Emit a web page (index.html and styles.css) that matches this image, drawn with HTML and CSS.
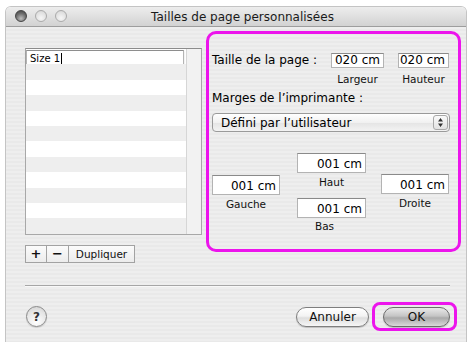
FILE: index.html
```html
<!DOCTYPE html>
<html lang="fr">
<head>
    <meta charset="UTF-8">
    <title>Tailles de page personnalisées</title>
    <link rel="stylesheet" href="styles.css">
</head>
<body>
    <div class="window">
        <div class="titlebar">
            <div class="lights">
                <span class="light light-close"></span>
                <span class="light"></span>
                <span class="light"></span>
            </div>
            <div class="title">Tailles de page personnalisées</div>
        </div>

        <div class="content">
            <div class="main">
                <div class="sizes">
                    <div class="size-list">
                        <div class="rows">
                            <div class="row row-edit"><span class="edit-field">Size 1<span class="caret"></span></span></div>
                            <div class="row"></div>
                            <div class="row"></div>
                            <div class="row"></div>
                            <div class="row"></div>
                            <div class="row"></div>
                            <div class="row"></div>
                            <div class="row"></div>
                            <div class="row"></div>
                            <div class="row"></div>
                            <div class="row"></div>
                            <div class="row"></div>
                        </div>
                        <div class="track"></div>
                    </div>
                    <div class="segmented">
                        <button class="seg seg-icon">+</button>
                        <button class="seg seg-icon">&minus;</button>
                        <button class="seg seg-text">Dupliquer</button>
                    </div>
                </div>

                <div class="panel">
                    <div class="page-size">
                        <div class="field-label">Taille de la page :</div>
                        <div class="field field-w">
                            <div class="input input-sm">020 cm</div>
                            <div class="caption">Largeur</div>
                        </div>
                        <div class="field field-h">
                            <div class="input input-sm">020 cm</div>
                            <div class="caption">Hauteur</div>
                        </div>
                    </div>

                    <div class="section-label">Marges de l’imprimante :</div>
                    <div class="popup">
                        <span>Défini par l’utilisateur</span>
                        <span class="popup-arrows">
                            <svg width="7" height="11" viewBox="0 0 7 11"><path d="M3.5 1 L6 4.5 L1 4.5 Z M3.5 10 L6 6.5 L1 6.5 Z" fill="#333"/></svg>
                        </span>
                    </div>

                    <div class="margins">
                        <div class="mcol mcol-left">
                            <div class="input input-lg">001 cm</div>
                            <div class="caption">Gauche</div>
                        </div>
                        <div class="mcol mcol-mid">
                            <div class="input input-lg">001 cm</div>
                            <div class="caption">Haut</div>
                            <div class="input input-lg input-bas">001 cm</div>
                            <div class="caption caption-bas">Bas</div>
                        </div>
                        <div class="mcol mcol-right">
                            <div class="input input-lg">001 cm</div>
                            <div class="caption">Droite</div>
                        </div>
                    </div>
                </div>
            </div>

            <div class="separator"></div>

            <div class="footer">
                <button class="help">?</button>
                <div class="spacer"></div>
                <button class="pill">Annuler</button>
                <div class="ok-mark">
                    <button class="pill pill-default">OK</button>
                </div>
            </div>
        </div>
    </div>
</body>
</html>
```

FILE: styles.css
```css
body {
    margin: 0;
    padding: 7px 0 0 6px;
    background: #fff;
    font-family: 'DejaVu Sans', sans-serif;
    color: #000;
}

.window {
    width: 460px;
    height: 335px;
    border-radius: 5px 5px 0 0;
    overflow: hidden;
    background: repeating-linear-gradient(#eeeeee 0 2px, #e9e9e9 2px 4px);
    box-shadow: 0 0 0 1px #c4c4c4;
}

.titlebar {
    position: relative;
    height: 19px;
    background: linear-gradient(#ededed, #d2d2d2);
    border-bottom: 1px solid #9d9d9d;
    display: flex;
    align-items: center;
    justify-content: center;
}

.lights {
    position: absolute;
    left: 9px;
    top: 3px;
    display: flex;
    gap: 8px;
}

.light {
    width: 12px;
    height: 12px;
    border-radius: 50%;
    box-sizing: border-box;
    border: 1px solid #aaaaaa;
    background: radial-gradient(circle at 50% 70%, #f6f6f6, #dedede 70%, #c9c9c9);
}

.light-close {
    border-color: #444;
    background: radial-gradient(circle at 50% 75%, #bdbdbd, #6e6e6e 55%, #3e3e3e);
}

.title {
    font-size: 12px;
    color: #1a1a1a;
    margin-left: 13px;
    margin-top: 1px;
}

.content {
    padding: 4px 5px 0 19px;
}

.main {
    display: flex;
    align-items: flex-start;
    gap: 4px;
}

/* liste des tailles */

.sizes {
    width: 177px;
    padding-top: 17px;
}

.size-list {
    height: 187px;
    box-sizing: border-box;
    border: 1px solid #a8a8a8;
    border-top-color: #8c8c8c;
    background: #fff;
    display: flex;
}

.rows {
    flex: 1;
}

.row {
    height: 15.4px;
    background: #fff;
}

.row:nth-child(even) {
    background: #eeeeee;
}

.row-edit {
    padding: 1px 2px 0 0;
    box-sizing: border-box;
}

.edit-field {
    display: flex;
    align-items: center;
    height: 14px;
    border: 1px solid #b4b4b4;
    border-top-color: #8e8e8e;
    background: #fff;
    font-size: 10px;
    padding-left: 3px;
    box-shadow: 0 1px 2px rgba(0, 0, 0, 0.15);
}

.caret {
    width: 1px;
    height: 11px;
    background: #000;
    margin-left: 1px;
}

.track {
    width: 14px;
    background: #f2f2f2;
    border-left: 1px solid #d6d6d6;
}

.segmented {
    display: flex;
    margin-top: 10px;
    height: 18px;
}

.seg {
    height: 18px;
    margin: 0;
    padding: 0;
    border: 1px solid #a2a2a2;
    border-left: none;
    background: linear-gradient(#fbfbfb, #ececec);
    font-family: 'DejaVu Sans', sans-serif;
    color: #111;
}

.seg:first-child {
    border-left: 1px solid #a2a2a2;
}

.seg-icon {
    width: 22px;
    font-size: 13px;
    font-weight: bold;
    line-height: 14px;
}

.seg-text {
    width: 66px;
    font-size: 10.5px;
}

/* zone encadrée */

.panel {
    width: 255px;
    height: 221px;
    box-sizing: border-box;
    border: 3px solid #ec14ec;
    border-radius: 10px;
    padding: 19px 0 0 3px;
}

.page-size {
    display: flex;
    align-items: flex-start;
}

.field-label {
    width: 119px;
    font-size: 12px;
    line-height: 15px;
}

.field {
    display: flex;
    flex-direction: column;
    align-items: center;
}

.field-w {
    width: 53px;
}

.field-h {
    width: 51px;
    margin-left: 14px;
}

.input {
    width: 100%;
    box-sizing: border-box;
    background: #fff;
    border: 1px solid #b3b3b3;
    border-top-color: #8a8a8a;
    text-align: right;
    padding-right: 3px;
    font-size: 12px;
}

.input-sm {
    height: 15px;
    line-height: 13px;
}

.input-lg {
    height: 20px;
    line-height: 20px;
}

.caption {
    font-size: 10.5px;
    line-height: 13px;
    margin-top: 2.5px;
    text-align: center;
    color: #111;
}

.field .caption {
    margin-top: 5px;
}

.section-label {
    font-size: 12px;
    line-height: 15px;
    margin-top: 5px;
}

.popup {
    width: 238px;
    height: 19px;
    box-sizing: border-box;
    margin-top: 7px;
    border: 1px solid #9a9a9a;
    border-radius: 4px;
    background: linear-gradient(#ffffff, #f1f1f1 50%, #e4e4e4 51%, #f3f3f3);
    display: flex;
    align-items: center;
    justify-content: space-between;
    padding-left: 8px;
    padding-right: 1px;
    font-size: 12px;
}

.popup-arrows {
    width: 15px;
    height: 15px;
    box-sizing: border-box;
    border: 1px solid #a8a8a8;
    border-radius: 3px;
    background: linear-gradient(#fafafa, #e2e2e2);
    display: flex;
    align-items: center;
    justify-content: center;
}

.margins {
    display: flex;
    align-items: flex-start;
    margin-top: 21px;
}

.mcol {
    display: flex;
    flex-direction: column;
}

.mcol-left {
    width: 68px;
    padding-top: 22px;
}

.mcol-mid {
    width: 69px;
    margin-left: 17px;
}

.mcol-right {
    width: 68px;
    margin-left: 15px;
    padding-top: 21px;
}

.input-bas {
    margin-top: 9px;
}

.caption-bas {
    margin-right: 14px;
}

/* bas de fenêtre */

.separator {
    width: 425px;
    height: 1px;
    background: #a6a6a6;
    box-shadow: 0 1px 0 #f8f8f8;
    margin-top: 22px;
}

.footer {
    display: flex;
    align-items: center;
    margin-top: 16px;
    margin-right: 4px;
    height: 29px;
}

.help {
    width: 21px;
    height: 21px;
    margin: 0 0 0 1px;
    padding: 0;
    border-radius: 50%;
    border: 1px solid #8a8a8a;
    background: radial-gradient(circle at 50% 80%, #ffffff, #e6e6e6 60%, #cfcfcf);
    font-family: 'DejaVu Sans', sans-serif;
    font-size: 12px;
    font-weight: bold;
    color: #333;
    box-shadow: 0 1px 1px rgba(0, 0, 0, 0.15);
}

.spacer {
    flex: 1;
}

.pill {
    height: 20px;
    margin: 0;
    padding: 0;
    border-radius: 10px;
    border: 1px solid #7e7e7e;
    background: linear-gradient(#ffffff, #f3f3f3 45%, #dedede 55%, #f6f6f6);
    font-family: 'DejaVu Sans', sans-serif;
    font-size: 12px;
    color: #111;
    width: 73px;
    box-shadow: 0 1px 1px rgba(0, 0, 0, 0.2);
}

.ok-mark {
    margin-left: 3px;
    width: 85px;
    height: 29px;
    box-sizing: border-box;
    border: 3px solid #ec14ec;
    border-radius: 8px;
    display: flex;
    align-items: center;
    padding-left: 8px;
}

.pill-default {
    width: 67px;
    background: linear-gradient(#e9e9e9, #c4c4c4 45%, #a9a9a9 55%, #d9d9d9);
    border-color: #6a6a6a;
}
```
